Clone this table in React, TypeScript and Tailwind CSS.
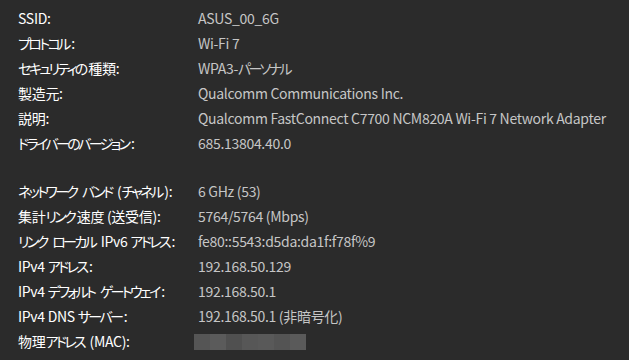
import React from "react";

const rows1: [string, string][] = [
  ["SSID:", "ASUS_00_6G"],
  ["プロトコル:", "Wi-Fi 7"],
  ["セキュリティの種類:", "WPA3-パーソナル"],
  ["製造元:", "Qualcomm Communications Inc."],
  ["説明:", "Qualcomm FastConnect C7700 NCM820A Wi-Fi 7 Network Adapter"],
  ["ドライバーのバージョン:", "685.13804.40.0"],
];

const rows2: [string, string][] = [
  ["ネットワーク バンド (チャネル):", "6 GHz (53)"],
  ["集計リンク速度 (送受信):", "5764/5764 (Mbps)"],
  ["リンク ローカル IPv6 アドレス:", "fe80::5543:d5da:da1f:f78f%9"],
  ["IPv4 アドレス:", "192.168.50.129"],
  ["IPv4 デフォルト ゲートウェイ:", "192.168.50.1"],
  ["IPv4 DNS サーバー:", "192.168.50.1 (非暗号化)"],
];

const mosaic = ["#555555", "#5b5b5b", "#505050", "#575757", "#595959", "#545454", "#5a5a5a"];

function JText({ text }: { text: string }) {
  const parts = text.split(/([\u3040-\u30ff]+)/);
  return (
    <>
      {parts.map((p, i) =>
        /^[\u3040-\u30ff]+$/.test(p) ? (
          <span key={i}>
            <span className="tracking-[-2.6px]">{p.slice(0, -1)}</span>
            <span>{p.slice(-1)}</span>
          </span>
        ) : (
          <span key={i} className="tracking-[-0.3px]">
            {p}
          </span>
        )
      )}
    </>
  );
}

function Row({ label, value }: { label: string; value: React.ReactNode }) {
  return (
    <div className="flex h-[25px] items-center">
      <div className="w-[180px] shrink-0 text-white whitespace-pre">
        <JText text={label} />
      </div>
      <div className="text-[#c6c6c6] whitespace-pre">
        {typeof value === "string" ? <JText text={value} /> : value}
      </div>
    </div>
  );
}

export default function App() {
  return (
    <div
      className="w-[629px] h-[360px] bg-[#2b2b2b] overflow-hidden pl-[18px] pt-[5px] text-[14px] leading-[20px] [font-feature-settings:'palt']"
      style={{ fontFamily: '"Noto Sans CJK JP", sans-serif' }}
    >
      <div className="flex flex-col">
        {rows1.map(([l, v]) => (
          <Row key={l} label={l} value={v} />
        ))}
      </div>
      <div className="h-[23px]" />
      <div className="flex flex-col">
        {rows2.map(([l, v]) => (
          <Row key={l} label={l} value={v} />
        ))}
        <Row
          label="物理アドレス (MAC):"
          value={
            <div className="flex h-[16px] ml-[-4px] mt-[3px]">
              {mosaic.map((c, i) => (
                <div key={i} className="w-[16px] h-[16px]" style={{ backgroundColor: c }} />
              ))}
            </div>
          }
        />
      </div>
    </div>
  );
}
